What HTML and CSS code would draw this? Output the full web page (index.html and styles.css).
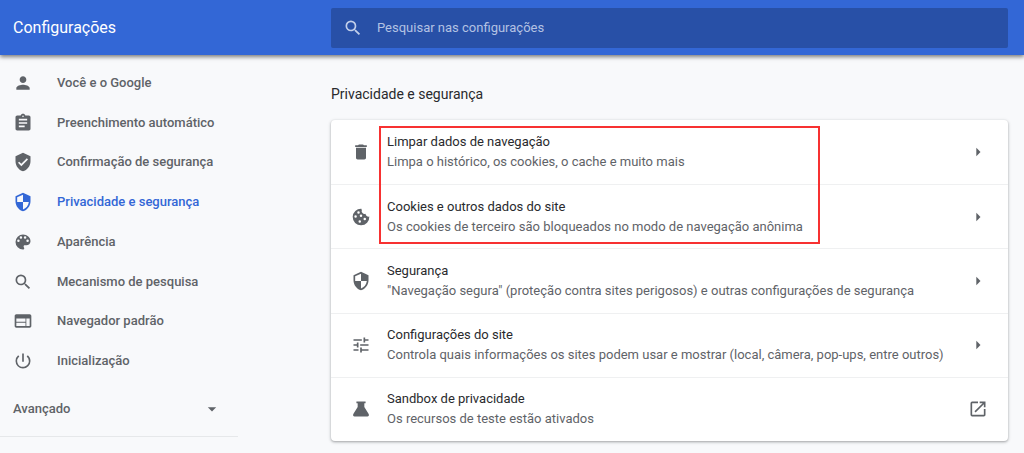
FILE: index.html
```html
<!DOCTYPE html>
<html lang="pt-BR">
<head>
  <meta charset="UTF-8" />
  <meta name="viewport" content="width=device-width, initial-scale=1.0"/>
  <title>Configurações</title>

  <link rel="stylesheet" href="styles.css">
</head>
<body>
  <header class="toolbar">
    <h1>Configurações</h1>
    <label class="search">
      <svg class="icon" viewBox="0 0 24 24"><path d="M15.5 14h-.79l-.28-.27A6.47 6.47 0 0 0 16 9.5 6.5 6.5 0 1 0 9.5 16c1.61 0 3.09-.59 4.23-1.57l.27.28v.79l5 4.99L20.49 19l-4.99-5zm-6 0C7.01 14 5 11.99 5 9.5S7.01 5 9.5 5 14 7.01 14 9.5 11.99 14 9.5 14z"/></svg>
      <input type="search" placeholder="Pesquisar nas configurações" aria-label="Pesquisar nas configurações">
    </label>
  </header>

  <div class="page">
    <aside class="sidebar">
      <nav class="menu">
        <a href="#voce">
          <svg class="icon" viewBox="0 0 24 24"><path d="M12 12c2.21 0 4-1.79 4-4s-1.79-4-4-4-4 1.79-4 4 1.79 4 4 4zm0 2c-2.67 0-8 1.34-8 4v2h16v-2c0-2.66-5.33-4-8-4z"/></svg>
          Você e o Google
        </a>
        <a href="#preenchimento">
          <svg class="icon" viewBox="0 0 24 24"><path d="M19 3h-4.18C14.4 1.84 13.3 1 12 1s-2.4.84-2.82 2H5c-1.1 0-2 .9-2 2v14c0 1.1.9 2 2 2h14c1.1 0 2-.9 2-2V5c0-1.1-.9-2-2-2zm-7 0c.55 0 1 .45 1 1s-.45 1-1 1-1-.45-1-1 .45-1 1-1zm2 14H7v-2h7v2zm3-4H7v-2h10v2zm0-4H7V7h10v2z"/></svg>
          Preenchimento automático
        </a>
        <a href="#confirmacao">
          <svg class="icon" viewBox="0 0 24 24"><path d="M12 1L3 5v6c0 5.55 3.84 10.74 9 12 5.16-1.26 9-6.45 9-12V5l-9-4zm-2 16l-4-4 1.41-1.41L10 14.17l6.59-6.59L18 9l-8 8z"/></svg>
          Confirmação de segurança
        </a>
        <a href="#privacidade" class="selected">
          <svg class="icon" viewBox="0 0 24 24"><path d="M12 1L3 5v6c0 5.55 3.84 10.74 9 12 5.16-1.26 9-6.45 9-12V5l-9-4zm0 10.99h7c-.53 4.12-3.28 7.79-7 8.94V12H5V6.3l7-3.11v8.8z"/></svg>
          Privacidade e segurança
        </a>
        <a href="#aparencia">
          <svg class="icon" viewBox="0 0 24 24"><path d="M12 3a9 9 0 0 0 0 18c.83 0 1.5-.67 1.5-1.5 0-.39-.15-.74-.39-1.01-.23-.26-.38-.61-.38-.99 0-.83.67-1.5 1.5-1.5H16c2.76 0 5-2.24 5-5 0-4.42-4.03-8-9-8zm-5.5 9a1.5 1.5 0 1 1 0-3 1.5 1.5 0 0 1 0 3zm3-4a1.5 1.5 0 1 1 0-3 1.5 1.5 0 0 1 0 3zm5 0a1.5 1.5 0 1 1 0-3 1.5 1.5 0 0 1 0 3zm3 4a1.5 1.5 0 1 1 0-3 1.5 1.5 0 0 1 0 3z"/></svg>
          Aparência
        </a>
        <a href="#pesquisa">
          <svg class="icon" viewBox="0 0 24 24"><path d="M15.5 14h-.79l-.28-.27A6.47 6.47 0 0 0 16 9.5 6.5 6.5 0 1 0 9.5 16c1.61 0 3.09-.59 4.23-1.57l.27.28v.79l5 4.99L20.49 19l-4.99-5zm-6 0C7.01 14 5 11.99 5 9.5S7.01 5 9.5 5 14 7.01 14 9.5 11.99 14 9.5 14z"/></svg>
          Mecanismo de pesquisa
        </a>
        <a href="#navegador">
          <svg class="icon" viewBox="0 0 24 24"><path d="M20 4H4c-1.1 0-1.99.9-1.99 2L2 18c0 1.1.9 2 2 2h16c1.1 0 2-.9 2-2V6c0-1.1-.9-2-2-2zm-5 14H4v-4h11v4zm0-5H4V9h11v4zm5 5h-4V9h4v9z"/></svg>
          Navegador padrão
        </a>
        <a href="#inicializacao">
          <svg class="icon" viewBox="0 0 24 24"><path d="M13 3h-2v10h2V3zm4.83 2.17l-1.42 1.42A6.92 6.92 0 0 1 19 12c0 3.87-3.13 7-7 7A6.995 6.995 0 0 1 7.58 6.58L6.17 5.17A8.932 8.932 0 0 0 3 12a9 9 0 0 0 18 0c0-2.74-1.23-5.18-3.17-6.83z"/></svg>
          Inicialização
        </a>
      </nav>
      <button class="advanced" type="button">
        Avançado
        <svg class="icon" viewBox="0 0 24 24"><path d="M7 10l5 5 5-5z"/></svg>
      </button>
    </aside>

    <main>
      <h2>Privacidade e segurança</h2>
      <div class="card">
        <button class="row" type="button">
          <svg class="icon" viewBox="0 0 24 24"><path d="M6 19c0 1.1.9 2 2 2h8c1.1 0 2-.9 2-2V7H6v12zM19 4h-3.5l-1-1h-5l-1 1H5v2h14V4z"/></svg>
          <span class="text">
            <span class="label">Limpar dados de navegação</span>
            <span class="sub">Limpa o histórico, os cookies, o cache e muito mais</span>
          </span>
          <svg class="icon" viewBox="0 0 24 24"><path d="M10 7l5 5-5 5z"/></svg>
        </button>
        <button class="row" type="button">
          <svg class="icon" viewBox="0 0 24 24"><path fill-rule="evenodd" d="M22 11.5a3.5 3.5 0 0 1-4.5-3.5A3.5 3.5 0 0 1 13 3.5 3.5 3.5 0 0 1 12.5 2 10 10 0 1 0 22 11.5zM9 5a1.5 1.5 0 1 1 0 3 1.5 1.5 0 0 1 0-3zM5.5 10a1.5 1.5 0 1 1 0 3 1.5 1.5 0 0 1 0-3zM12 9a1.5 1.5 0 1 1 0 3 1.5 1.5 0 0 1 0-3zM10.5 16a1.5 1.5 0 1 1 0 3 1.5 1.5 0 0 1 0-3zM16.5 13a1.5 1.5 0 1 1 0 3 1.5 1.5 0 0 1 0-3z"/></svg>
          <span class="text">
            <span class="label">Cookies e outros dados do site</span>
            <span class="sub">Os cookies de terceiro são bloqueados no modo de navegação anônima</span>
          </span>
          <svg class="icon" viewBox="0 0 24 24"><path d="M10 7l5 5-5 5z"/></svg>
        </button>
        <button class="row" type="button">
          <svg class="icon" viewBox="0 0 24 24"><path d="M12 1L3 5v6c0 5.55 3.84 10.74 9 12 5.16-1.26 9-6.45 9-12V5l-9-4zm0 10.99h7c-.53 4.12-3.28 7.79-7 8.94V12H5V6.3l7-3.11v8.8z"/></svg>
          <span class="text">
            <span class="label">Segurança</span>
            <span class="sub">"Navegação segura" (proteção contra sites perigosos) e outras configurações de segurança</span>
          </span>
          <svg class="icon" viewBox="0 0 24 24"><path d="M10 7l5 5-5 5z"/></svg>
        </button>
        <button class="row" type="button">
          <svg class="icon" viewBox="0 0 24 24"><path d="M3 17v2h6v-2H3zM3 5v2h10V5H3zm10 16v-2h8v-2h-8v-2h-2v6h2zM7 9v2H3v2h4v2h2V9H7zm14 4v-2H11v2h10zm-6-4h2V7h4V5h-4V3h-2v6z"/></svg>
          <span class="text">
            <span class="label">Configurações do site</span>
            <span class="sub">Controla quais informações os sites podem usar e mostrar (local, câmera, pop-ups, entre outros)</span>
          </span>
          <svg class="icon" viewBox="0 0 24 24"><path d="M10 7l5 5-5 5z"/></svg>
        </button>
        <a class="row" href="#sandbox">
          <svg class="icon" viewBox="0 0 24 24"><path d="M6.5 3h11v2H16v4.5l5.2 8.6C22 19.6 21.2 21 19.7 21H4.3c-1.5 0-2.3-1.4-1.5-2.9L8 9.5V5H6.5z"/></svg>
          <span class="text">
            <span class="label">Sandbox de privacidade</span>
            <span class="sub">Os recursos de teste estão ativados</span>
          </span>
          <svg class="icon" viewBox="0 0 24 24"><path d="M19 19H5V5h7V3H5a2 2 0 0 0-2 2v14a2 2 0 0 0 2 2h14c1.1 0 2-.9 2-2v-7h-2v7zM14 3v2h3.59l-9.83 9.83 1.41 1.41L19 6.41V10h2V3h-7z"/></svg>
        </a>
        <div class="highlight"></div>
      </div>
    </main>
  </div>
</body>
</html>
```
FILE: styles.css
```css
* {
  box-sizing: border-box;
}

body {
  margin: 0;
  font-family: Roboto, 'Liberation Sans', sans-serif;
  font-size: 13px;
  line-height: 20px;
  color: #292a2d;
  background: #f8f9fb;
}

.toolbar, .page {
  display: grid;
  grid-template-columns: 331px minmax(0, 1fr);
  padding-right: 16px;
}

.toolbar {
  align-items: center;
  height: 55px;
  color: #fff;
  background: #3367d6;
  box-shadow: 0 2px 4px rgba(0, 0, 0, 0.5);
}

.icon {
  width: 20px;
  height: 20px;
  flex-shrink: 0;
  fill: #5f6368;
}

h1 {
  margin: 0;
  padding-left: 13px;
  font-size: 16px;
  font-weight: 400;
}

.search {
  display: flex;
  align-items: center;
  gap: 14px;
  height: 40px;
  padding: 0 12px;
  border-radius: 2px;
  background: #2850a7;
}

.search .icon {
  fill: #c2cfea;
}

.search input {
  flex: 1;
  padding: 0;
  border: none;
  outline: none;
  font: inherit;
  color: #fff;
  background: none;
}

.search input::placeholder {
  color: #b3c2e3;
}

.menu {
  display: grid;
  grid-auto-rows: 1fr;
  min-height: 318px;
  margin-top: 8px;
}

.menu a {
  display: flex;
  align-items: center;
  gap: 24px;
  padding-left: 13px;
  font-weight: 500;
  color: #5f6368;
  text-decoration: none;
}

.menu a.selected, .menu .selected .icon {
  color: #3367d6;
  fill: #3367d6;
}

.advanced {
  display: flex;
  align-items: center;
  justify-content: space-between;
  width: 238px;
  height: 56px;
  padding: 0 16px 0 13px;
  border: none;
  border-bottom: 1px solid #e6e8ea;
  font: inherit;
  font-weight: 500;
  color: #5f6368;
  background: none;
}

h2 {
  margin: 0;
  padding: 29px 0 16px;
  font-size: 14px;
  font-weight: 400;
}

.card {
  position: relative;
  display: grid;
  grid-auto-rows: 1fr;
  min-height: 321px;
  margin-bottom: 12px;
  border-radius: 4px;
  background: #fff;
  box-shadow: 0 1px 2px rgba(60, 64, 67, 0.3), 0 1px 3px 1px rgba(60, 64, 67, 0.15);
}

.row {
  display: flex;
  align-items: center;
  gap: 16px;
  padding: 0 20px;
  border: none;
  font: inherit;
  text-align: left;
  text-decoration: none;
  color: #292a2d;
  background: none;
}

.row + .row {
  border-top: 1px solid #eff0f1;
}

.text {
  flex: 1;
}

.label, .sub {
  display: block;
}

.sub {
  color: #5f6368;
}

/* red frame over the first two rows */
.highlight {
  position: absolute;
  top: 6px;
  left: 48px;
  width: 441px;
  height: 118px;
  border: 2px solid #f73131;
  pointer-events: none;
}
```
